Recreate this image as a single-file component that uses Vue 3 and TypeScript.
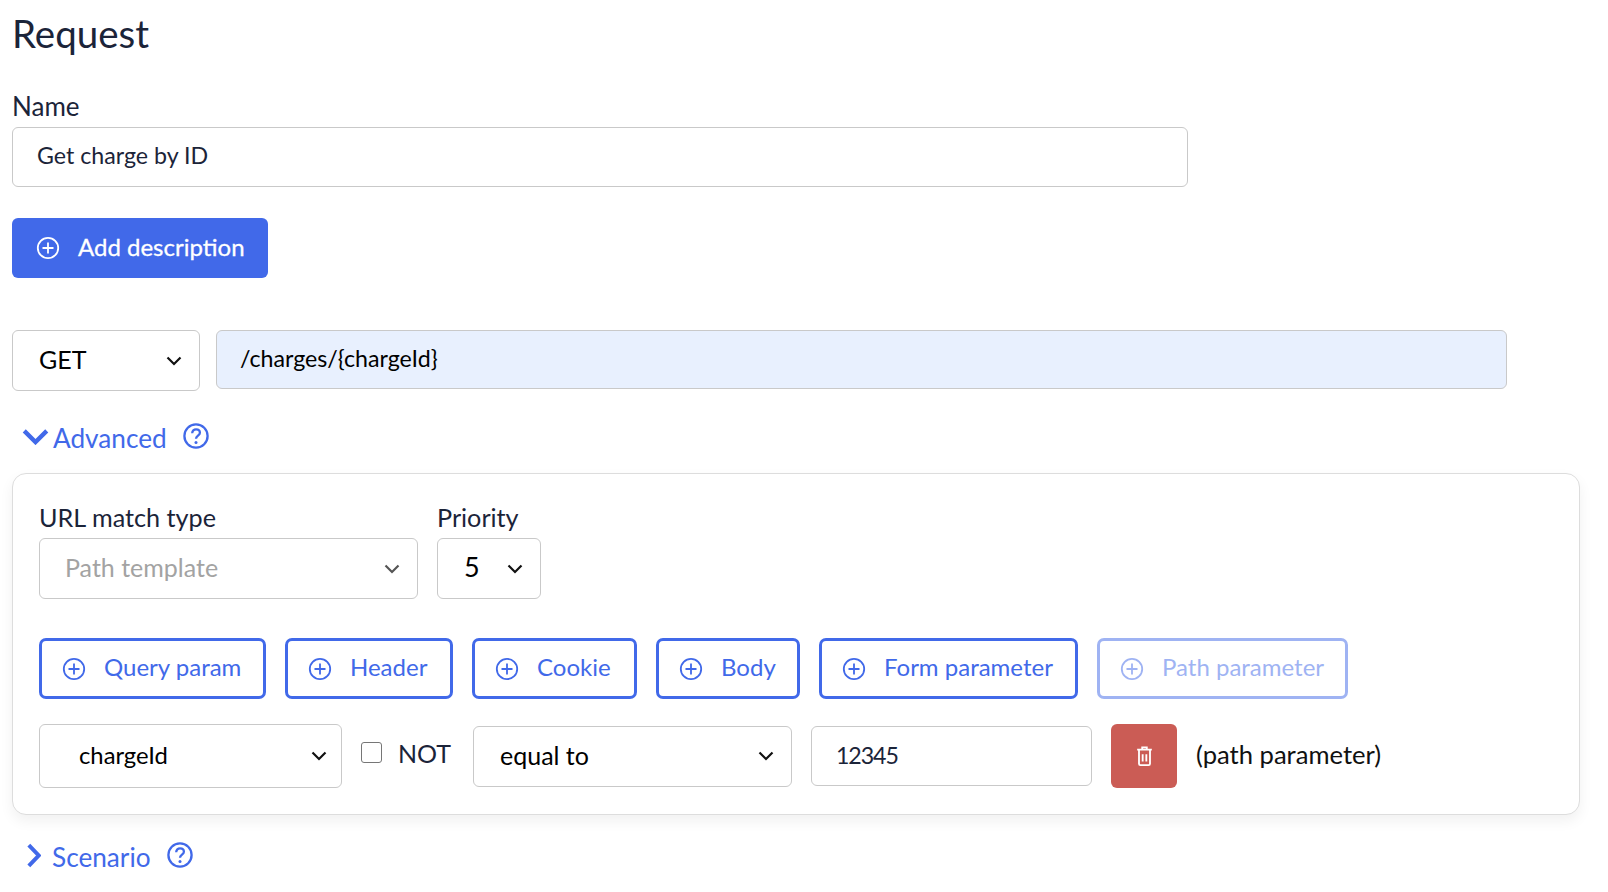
<script setup lang="ts">
const addButtons: { label: string; width: number; disabled?: boolean }[] = [
  { label: 'Query param', width: 227 },
  { label: 'Header', width: 168 },
  { label: 'Cookie', width: 165 },
  { label: 'Body', width: 144 },
  { label: 'Form parameter', width: 259 },
  { label: 'Path parameter', width: 251, disabled: true },
]
</script>

<template>
  <main class="page">
    <h1 class="title">Request</h1>

    <label class="label name-label">Name</label>
    <input class="input name-input" value="Get charge by ID" readonly />

    <button class="add-desc">
      <svg class="plus" viewBox="0 0 24 24"><circle cx="12" cy="12" r="10.2" /><path d="M12 6.5v11M6.5 12h11" /></svg>
      <span>Add description</span>
    </button>

    <div class="url-row">
      <div class="select method">
        <span>GET</span>
        <svg class="chev" viewBox="0 0 16 10"><path d="M1.5 1.5 8 8l6.5-6.5" /></svg>
      </div>
      <input class="input url-input" value="/charges/{chargeId}" readonly />
    </div>

    <div class="toggle advanced">
      <svg class="arrow-down" viewBox="0 0 24 14"><path d="M2 2l10 10L22 2" /></svg>
      <span class="toggle-text">Advanced</span>
      <svg class="help" viewBox="0 0 26 26"><circle cx="13" cy="13" r="11.6" /><path d="M9.2 10.2c0-2.4 1.7-3.9 3.9-3.9s3.8 1.4 3.8 3.4c0 2.9-3.9 3-3.9 6" /><circle class="dot" cx="13" cy="19.6" r="1.5" /></svg>
    </div>

    <section class="card">
      <div class="top-fields">
        <div class="field">
          <label class="label">URL match type</label>
          <div class="select match disabled">
            <span>Path template</span>
            <svg class="chev" viewBox="0 0 16 10"><path d="M1.5 1.5 8 8l6.5-6.5" /></svg>
          </div>
        </div>
        <div class="field">
          <label class="label">Priority</label>
          <div class="select priority">
            <span>5</span>
            <svg class="chev" viewBox="0 0 16 10"><path d="M1.5 1.5 8 8l6.5-6.5" /></svg>
          </div>
        </div>
      </div>

      <div class="add-row">
        <button
          v-for="b in addButtons"
          :key="b.label"
          class="add-btn"
          :class="{ off: b.disabled }"
          :style="{ width: b.width + 'px' }"
        >
          <svg class="plus" viewBox="0 0 24 24"><circle cx="12" cy="12" r="10.2" /><path d="M12 6.5v11M6.5 12h11" /></svg>
          <span>{{ b.label }}</span>
        </button>
      </div>

      <div class="param-row">
        <div class="select param">
          <span>chargeId</span>
          <svg class="chev" viewBox="0 0 16 10"><path d="M1.5 1.5 8 8l6.5-6.5" /></svg>
        </div>
        <input class="check" type="checkbox" />
        <span class="not">NOT</span>
        <div class="select op">
          <span>equal to</span>
          <svg class="chev" viewBox="0 0 16 10"><path d="M1.5 1.5 8 8l6.5-6.5" /></svg>
        </div>
        <input class="input value" value="12345" readonly />
        <button class="del">
          <svg viewBox="0 0 18 24"><path d="M1 5h16M6.500 5V2.500h5V5M3 5.500V20.500a1.500 1.500 0 0 0 1.500 1.500h9a1.500 1.500 0 0 0 1.500-1.500V5.500M7 10v8M11 10v8" /></svg>
        </button>
        <span class="hint">(path parameter)</span>
      </div>
    </section>

    <div class="toggle scenario">
      <svg class="arrow-right" viewBox="0 0 14 24"><path d="M2.500 2l9.500 10-9.500 10" /></svg>
      <span class="toggle-text">Scenario</span>
      <svg class="help" viewBox="0 0 26 26"><circle cx="13" cy="13" r="11.6" /><path d="M9.2 10.2c0-2.4 1.700-3.900 3.900-3.900s3.800 1.400 3.800 3.400c0 2.900-3.900 3-3.900 6" /><circle class="dot" cx="13" cy="19.6" r="1.5" /></svg>
    </div>
  </main>
</template>

<style>
html, body { margin: 0; background: #fff; }
</style>

<style scoped>
.page {
  box-sizing: border-box;
  width: 1608px;
  height: 892px;
  padding: 0 28px 0 12px;
  overflow: hidden;
  font-family: Lato, "Open Sans", sans-serif;
  font-size: 25px;
  color: #1b2439;
}
.title {
  margin: 0;
  padding-top: 10px;
  height: 82px;
  box-sizing: border-box;
  font-size: 38.5px;
  line-height: 46px;
  font-weight: 400;
}
.label { display: block; font-size: 25.2px; line-height: 30px; }
.name-label { height: 33px; margin-top: 12px; line-height: 24px; font-size: 26px; }
.input {
  display: block;
  box-sizing: border-box;
  border: 1px solid #c9c9c9;
  border-radius: 6px;
  font: inherit;
  font-size: 23.2px;
  color: inherit;
  outline: none;
  background: #fff;
  padding: 0 23px 4px;
}
.name-input { width: 1176px; height: 60px; padding-left: 24px; }
button { font: inherit; cursor: pointer; }
.plus { flex: none; width: 24px; height: 24px; fill: none; stroke: currentColor; stroke-width: 1.8; }
.add-desc {
  display: flex;
  align-items: center;
  gap: 18px;
  box-sizing: border-box;
  width: 256px;
  height: 60px;
  margin-top: 31px;
  padding: 0 0 0 24px;
  border: 0;
  border-radius: 6px;
  background: #4169e9;
  color: #fff;
  font-size: 24px;
  white-space: nowrap;
  -webkit-text-stroke: 0.3px #fff;
}
.add-desc span { position: relative; top: -2px; }
.url-row { display: flex; gap: 16px; margin-top: 52px; align-items: flex-start; }
.select {
  display: flex;
  align-items: center;
  justify-content: space-between;
  box-sizing: border-box;
  border: 1px solid #c9c9c9;
  border-radius: 6px;
  background: #fff;
  color: #000;
}
.select span { position: relative; top: -2px; }
.chev { flex: none; width: 16px; height: 10px; fill: none; stroke: #111; stroke-width: 2.2; }
.method { width: 188px; height: 61px; padding: 0 17px 0 26px; }
.url-input { width: 1291px; height: 59px; background: #e8f0fe; color: #000; }
.toggle { display: flex; align-items: center; color: #4169e9; font-size: 26.2px; }
.advanced { height: 34px; margin-top: 28px; padding-left: 10px; }
.arrow-down { width: 27px; height: 17px; fill: none; stroke: currentColor; stroke-width: 3.800; margin-right: 4px; }
.toggle-text { line-height: 34px; position: relative; top: 2px; }
.help { width: 26px; height: 26px; margin-left: 16px; fill: none; stroke: currentColor; stroke-width: 2.300; }
.help .dot { fill: currentColor; stroke: none; }
.card {
  box-sizing: border-box;
  width: 1568px;
  height: 342px;
  margin-top: 20px;
  padding: 28px 26px 0;
  border: 1px solid #ddd;
  border-radius: 14px;
  background: #fff;
  box-shadow: 0 6px 14px rgba(0, 0, 0, 0.06);
}
.top-fields { display: flex; gap: 19px; }
.field .label { height: 36px; }
.match { width: 379px; height: 61px; padding: 0 17px 0 25px; }
.match.disabled { color: #a3a3a3; }
.match.disabled .chev { stroke: #555; }
.priority { width: 104px; height: 61px; padding: 0 17px 0 26px; }
.priority span { font-size: 27px; }
.add-row { display: flex; gap: 19px; margin-top: 39px; }
.add-btn {
  display: flex;
  align-items: center;
  gap: 18px;
  box-sizing: border-box;
  height: 61px;
  padding: 0 20px;
  border: 3px solid #4169e9;
  border-radius: 7px;
  background: #fff;
  color: #4169e9;
  font-size: 24px;
  white-space: nowrap;
}
.add-btn span { position: relative; top: -2px; }
.add-btn.off { opacity: 0.5; }
.param-row { display: flex; align-items: center; margin-top: 24px; height: 66px; }
.param { width: 303px; height: 64px; padding: 0 14px 0 39px; }
.param span { font-size: 23.8px; top: -1px; }
.check {
  appearance: none;
  width: 21px;
  height: 21px;
  margin: -7px 0 0 19px;
  border: 1.500px solid #767676;
  border-radius: 3px;
  background: #fff;
}
.not { margin-left: 16px; width: 75px; position: relative; top: -3px; }
.op { width: 319px; height: 61px; padding: 0 17px 0 26px; }
.op span { top: -1px; }
.value { width: 281px; height: 60px; margin-left: 19px; padding-left: 24px; letter-spacing: -1.1px; padding-bottom: 3px; }
.del {
  display: flex;
  align-items: center;
  justify-content: center;
  width: 66px;
  height: 64px;
  margin-left: 19px;
  padding: 0;
  border: 0;
  border-radius: 6px;
  background: #cb5c55;
}
.del svg { width: 17px; height: 22px; fill: none; stroke: #fff; stroke-width: 2; }
.hint { margin-left: 19px; color: #111; font-size: 25.6px; position: relative; top: -2px; }
.scenario { height: 34px; margin-top: 23px; padding-left: 14px; }
.arrow-right { width: 15px; height: 25px; fill: none; stroke: currentColor; stroke-width: 3.800; margin-right: 11px; }
</style>
